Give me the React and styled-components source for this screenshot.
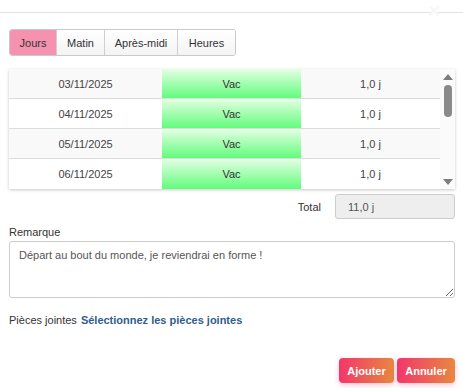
import React from "react";
import styled, { createGlobalStyle } from "styled-components";

const Global = createGlobalStyle`
  html, body { margin: 0; padding: 0; background: #fff; }
  body { font-family: "Liberation Sans", Arial, sans-serif; font-size: 11px; color: #333; }
  * { box-sizing: border-box; }
`;

const Page = styled.div`
  width: 463px;
  height: 388px;
  position: relative;
  overflow: hidden;
`;

const Header = styled.div`
  height: 13px;
  border-bottom: 1px solid #e3e3e3;
  position: relative;
`;

const Close = styled.span`
  position: absolute;
  right: 22px;
  top: 3px;
  font-size: 17px;
  line-height: 17px;
  color: #f8f8f8;
  font-weight: bold;
`;

const Body = styled.div`
  padding: 0 8px 0 9px;
  display: flex;
  flex-direction: column;
`;

const Tabs = styled.div`
  margin-top: 16px;
  display: flex;
  align-self: flex-start;
  border: 1px solid #c9c9c9;
  border-radius: 3px;
  overflow: hidden;
`;

const Tab = styled.div`
  height: 25px;
  width: ${(p) => p.$w}px;
  display: flex;
  align-items: center;
  justify-content: center;
  font-size: 11px;
  color: #333;
  background: ${(p) => (p.$active ? "#f592af" : "linear-gradient(#ffffff, #f4f4f4)")};
  border-left: ${(p) => (p.$first ? "none" : "1px solid #cfcfcf")};
`;

const TableBox = styled.div`
  margin-top: 13px;
  display: flex;
  box-shadow: 0 1px 3px rgba(0, 0, 0, 0.22);
`;

const Rows = styled.div`
  flex: 1;
  display: flex;
  flex-direction: column;
`;

const Row = styled.div`
  display: grid;
  grid-template-columns: 153px 139px 139px;
  height: 30px;
  background: ${(p) => (p.$odd ? "#f9f9f9" : "#ffffff")};
  border-bottom: ${(p) => (p.$last ? "none" : "1px solid #dcdcdc")};
`;

const Cell = styled.div`
  display: flex;
  align-items: center;
  justify-content: center;
  font-size: 11px;
  color: #444;
`;

const GreenCell = styled(Cell)`
  background: linear-gradient(#e4ffe4, #62fc7c);
  color: #333;
`;

const Scroll = styled.div`
  width: 15px;
  background: #fbfbfb;
  display: flex;
  flex-direction: column;
  align-items: center;
  padding: 5px 0 4px;
`;

const Arrow = styled.div`
  width: 0;
  height: 0;
  border-left: 5px solid transparent;
  border-right: 5px solid transparent;
  ${(p) => (p.$down ? "border-top: 6px solid #7d7d7d;" : "border-bottom: 6px solid #7d7d7d;")}
`;

const Thumb = styled.div`
  margin-top: 5px;
  width: 8px;
  height: 32px;
  border-radius: 4px;
  background: #8a8a8a;
`;

const Spacer = styled.div`
  flex: 1;
`;

const TotalRow = styled.div`
  margin-top: 5px;
  display: flex;
  justify-content: flex-end;
  align-items: center;
  gap: 14px;
`;

const TotalLabel = styled.span`
  font-size: 11px;
  color: #333;
`;

const TotalBox = styled.div`
  width: 120px;
  height: 25px;
  border: 1px solid #cccccc;
  border-radius: 3px;
  background: #eeeeee;
  color: #555;
  font-size: 11px;
  display: flex;
  align-items: center;
  padding-left: 12px;
`;

const Label = styled.div`
  margin-top: 7px;
  font-size: 11px;
  line-height: 13px;
  color: #333;
`;

const TextArea = styled.textarea`
  margin-top: 2px;
  width: 100%;
  height: 57px;
  border: 1px solid #cccccc;
  border-radius: 3px;
  padding: 7px 9px;
  font-family: "Liberation Sans", Arial, sans-serif;
  font-size: 11px;
  color: #555;
  resize: vertical;
  outline: none;
`;

const Attach = styled.div`
  margin-top: 15px;
  font-size: 11px;
  line-height: 14px;
  color: #333;
  display: flex;
  gap: 4px;
`;

const Link = styled.a`
  font-weight: bold;
  color: #2f5d8e;
  text-decoration: none;
`;

const Actions = styled.div`
  margin-top: 31px;
  display: flex;
  justify-content: flex-end;
  gap: 3px;
`;

const Button = styled.button`
  height: 25px;
  width: ${(p) => p.$w}px;
  border: none;
  border-radius: 4px;
  background: linear-gradient(to right, #f2376b, #e8873f);
  color: #fff;
  font-family: "Liberation Sans", Arial, sans-serif;
  font-weight: bold;
  font-size: 11px;
  box-shadow: 0 2px 5px rgba(242, 55, 107, 0.3);
  padding: 0;
`;

const data = ["03/11/2025", "04/11/2025", "05/11/2025", "06/11/2025"];

export default function App() {
  return (
    <Page>
      <Global />
      <Header>
        <Close>✕</Close>
      </Header>
      <Body>
        <Tabs>
          <Tab $active $first $w={46}>Jours</Tab>
          <Tab $w={48}>Matin</Tab>
          <Tab $w={73}>Après-midi</Tab>
          <Tab $w={58}>Heures</Tab>
        </Tabs>
        <TableBox>
          <Rows>
            {data.map((d, i) => (
              <Row key={d} $odd={i % 2 === 0} $last={i === data.length - 1}>
                <Cell>{d}</Cell>
                <GreenCell>Vac</GreenCell>
                <Cell>1,0 j</Cell>
              </Row>
            ))}
          </Rows>
          <Scroll>
            <Arrow />
            <Thumb />
            <Spacer />
            <Arrow $down />
          </Scroll>
        </TableBox>
        <TotalRow>
          <TotalLabel>Total</TotalLabel>
          <TotalBox>11,0 j</TotalBox>
        </TotalRow>
        <Label>Remarque</Label>
        <TextArea defaultValue="Départ au bout du monde, je reviendrai en forme !" />
        <Attach>
          <span>Pièces jointes</span>
          <Link href="#">Sélectionnez les pièces jointes</Link>
        </Attach>
        <Actions>
          <Button $w={55}>Ajouter</Button>
          <Button $w={58}>Annuler</Button>
        </Actions>
      </Body>
    </Page>
  );
}
